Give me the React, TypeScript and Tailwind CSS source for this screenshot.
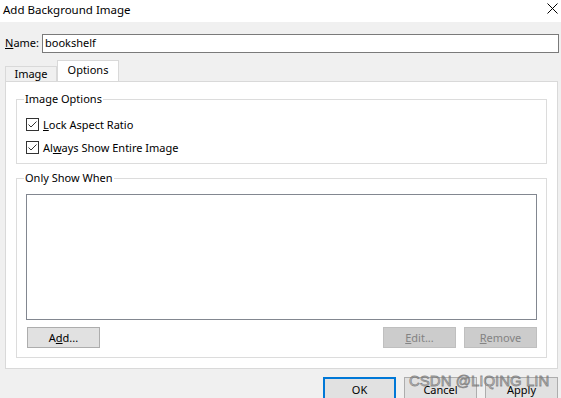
import React from "react";

const font = "font-['Noto_Sans',sans-serif]";

function CheckRow({ children }: { children: React.ReactNode }) {
  return (
    <div className="flex items-center h-[13px]">
      <span className="w-[13px] h-[13px] border border-[#333] bg-white flex items-center justify-center">
        <svg width="11" height="11" viewBox="0 0 11 11">
          <path d="M1.5 5.5 L4 8 L9.5 2.5" fill="none" stroke="#333" strokeWidth="1" />
        </svg>
      </span>
      <span className="ml-[4px] text-[11px] text-black leading-none">{children}</span>
    </div>
  );
}

function Btn({
  children,
  disabled,
  primary,
  className = "",
}: {
  children: React.ReactNode;
  disabled?: boolean;
  primary?: boolean;
  className?: string;
}) {
  const look = disabled
    ? "bg-[#cccccc] border border-[#bfbfbf] text-[#838383]"
    : primary
    ? "bg-[#e1e1e1] border-2 border-[#0078d7] text-black"
    : "bg-[#e1e1e1] border border-[#adadad] text-black";
  return (
    <div
      className={`w-[73px] h-[21px] flex items-center justify-center text-[11px] leading-none ${look} ${className}`}
    >
      {children}
    </div>
  );
}

function Group({
  title,
  className = "",
  children,
}: {
  title: string;
  className?: string;
  children: React.ReactNode;
}) {
  return (
    <div className={`relative border border-[#dcdcdc] ${className}`}>
      <span className="absolute left-[7px] top-[-8px] bg-white px-[1px] text-[11px] leading-[14px] text-black">
        {title}
      </span>
      {children}
    </div>
  );
}

export default function App() {
  return (
    <div className={`relative w-[561px] h-[398px] overflow-hidden bg-[#f0f0f0] ${font}`}>
      {/* title bar */}
      <div className="h-[22px] bg-white flex items-center justify-between pl-[3px] pr-[2px]">
        <span className="text-[11.5px] text-black leading-none mb-[3px]">Add Background Image</span>
        <svg width="11" height="11" viewBox="0 0 11 11" className="mb-[6px] mr-[1px]">
          <path d="M0.5 0.5 L10.5 10.5 M10.5 0.5 L0.5 10.5" stroke="#000" strokeWidth="1" />
        </svg>
      </div>

      {/* name row */}
      <div className="flex items-center mt-[12px] pl-[5px] pr-[2px]">
        <span className="shrink-0 text-[11px] text-black w-[37px]">
          <u>N</u>ame:
        </span>
        <div className="flex-1 h-[19px] border border-[#7a7a7a] bg-white flex items-center pl-[2px] text-[11px] text-black">
          bookshelf
        </div>
      </div>

      {/* tabs */}
      <div className="flex items-end mt-[7px] pl-[5px] h-[21px]">
        <div className="w-[52px] h-[15px] border border-b-0 border-[#d9d9d9] bg-[#f0f0f0] flex items-center justify-center text-[11px] text-black">
          Image
        </div>
        <div className="relative z-10 w-[62px] h-[21px] border border-b-0 border-[#d9d9d9] bg-white flex items-center justify-center text-[11px] text-black pb-[1px]">
          Options
        </div>
      </div>

      {/* panel */}
      <div className="ml-[5px] mr-[3px] h-[288px] border border-[#d9d9d9] bg-white pl-[10px] pr-[10px] pt-[17px]">
        <Group title="Image Options" className="h-[65px]">
          <div className="flex flex-col gap-[10px] pl-[9px] pt-[18px]">
            <CheckRow>
              <u>L</u>ock Aspect Ratio
            </CheckRow>
            <CheckRow>
              Al<u>w</u>ays Show Entire Image
            </CheckRow>
          </div>
        </Group>

        <Group title="Only Show When" className="mt-[14px] h-[180px]">
          <div className="px-[9px] pt-[15px]">
            <div className="h-[126px] border border-[#828790] bg-white" />
            <div className="flex items-center justify-between mt-[7px]">
              <Btn className="ml-[1px]">
                A<u>d</u>d...
              </Btn>
              <div className="flex gap-[8px]">
                <Btn disabled>
                  <u>E</u>dit...
                </Btn>
                <Btn disabled>
                  <u>R</u>emove
                </Btn>
              </div>
            </div>
          </div>
        </Group>
      </div>

      {/* dialog buttons */}
      <div className="flex justify-end gap-[8px] mt-[8px] pr-[3px]">
        <Btn primary className="h-[24px]">OK</Btn>
        <Btn className="h-[24px] w-[72px]">Cancel</Btn>
        <Btn className="h-[24px] w-[72px]">Apply</Btn>
      </div>

      {/* watermark */}
      <div className="absolute left-[409px] top-[373px] whitespace-nowrap text-[15px] leading-none font-['Liberation_Sans',sans-serif] text-[rgba(150,150,150,0.3)] [-webkit-text-stroke:0.8px_rgba(110,110,110,0.75)]">
        CSDN @LIQING LIN
      </div>
    </div>
  );
}
